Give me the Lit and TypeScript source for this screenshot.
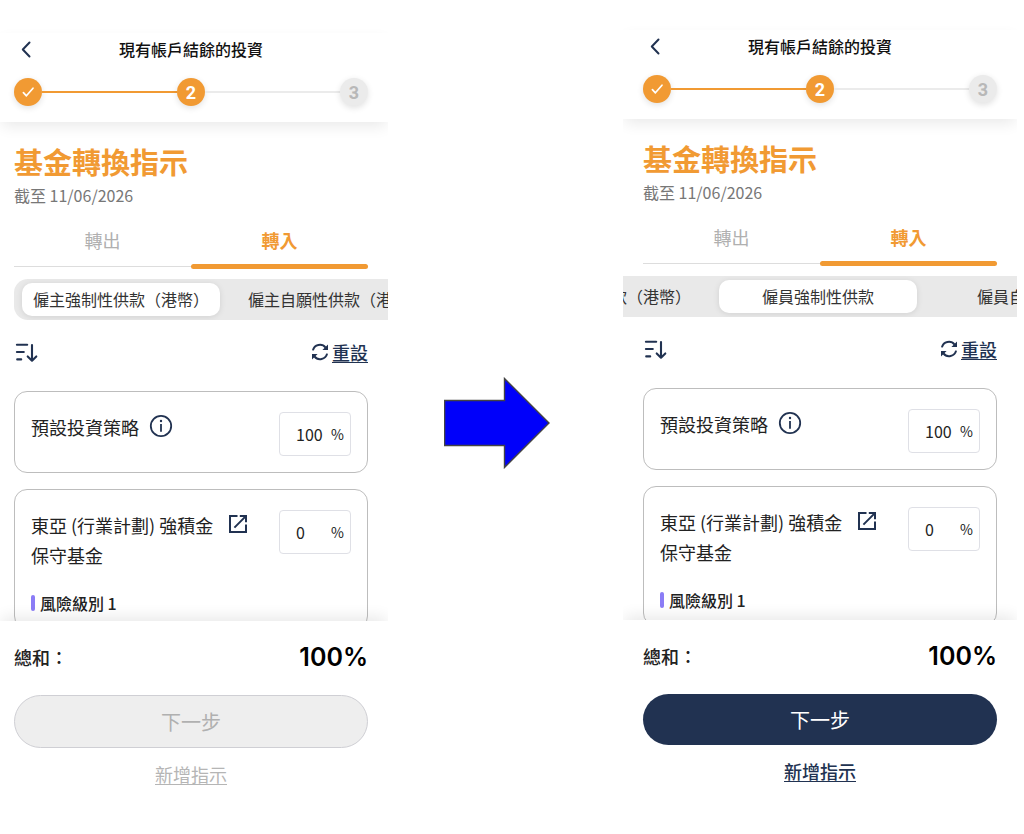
import { LitElement, html, css, svg, nothing } from "lit";
import { customElement, property, query } from "lit/decorators.js";
import { classMap } from "lit/directives/class-map.js";

interface Fund {
  id: string;
  name: string;
  icon: "info" | "open";
  percent: number;
  risk?: string;
}

const FUNDS: Fund[] = [
  { id: "dis", name: "預設投資策略", icon: "info", percent: 100 },
  { id: "conservative", name: "東亞 (行業計劃) 強積金保守基金", icon: "open", percent: 0, risk: "風險級別 1" },
];

const ACCOUNTS = ["僱主強制性供款（港幣）", "僱主自願性供款（港幣）", "僱員強制性供款", "僱員自願性供款"];

const chevron = svg`<svg width="24" height="24" viewBox="0 0 24 24" fill="none" stroke="currentColor" stroke-width="2" stroke-linecap="round" stroke-linejoin="round" aria-hidden="true"><path d="M15.500 5.500 8.800 12.500 15.500 19.500"/></svg>`;

const tick = svg`<svg width="14" height="12" viewBox="0 0 14 12" fill="none" stroke="currentColor" stroke-width="1.7" stroke-linecap="round" stroke-linejoin="round" aria-hidden="true"><path d="M2.4 6.6 5.4 9.8 12 2.2"/></svg>`;

const sortIcon = svg`<svg width="24" height="24" viewBox="0 0 24 24" fill="none" stroke="currentColor" stroke-width="2.1" stroke-linecap="round" stroke-linejoin="round" aria-hidden="true"><path d="M2.900 4.700H13.200M2.900 12H9.800M3.200 19.400H7.200M18 5V20.600M13.700 16.400 18 20.700 22.300 16.400"/></svg>`;

const resetIcon = svg`<svg width="18" height="18" viewBox="0 0 18 18" aria-hidden="true"><path d="M1.900 7.400A7.200 7.200 0 0 1 14.600 4.600M16.100 10.600A7.200 7.200 0 0 1 3.400 13.400" fill="none" stroke="currentColor" stroke-width="2"/><path d="M17 1.400V7H11.400ZM1 16.600V11H6.600Z" fill="currentColor"/></svg>`;

const infoIcon = svg`<svg width="24" height="24" viewBox="0 0 24 24" fill="none" stroke="currentColor" stroke-width="1.8" aria-hidden="true"><circle cx="12" cy="12" r="10.2"/><path d="M12 10V17.800"/><circle cx="12" cy="7" r="1.2" fill="currentColor" stroke="none"/></svg>`;

const openIcon = svg`<svg width="24" height="24" viewBox="0 0 24 24" fill="none" stroke="currentColor" stroke-width="2" aria-hidden="true"><path d="M11.500 4H4V20H20V12.500M13.800 4H20V10.200M19.600 4.400 8.400 15.600"/></svg>`;

@customElement("transfer-screen")
export class TransferScreen extends LitElement {
  @property({ type: Number }) account = 0;
  @property({ type: Boolean, reflect: true }) ready = false;
  @property({ type: String }) name = "";
  @query(".accounts") private strip!: HTMLElement;
  @query(".account.active") private active!: HTMLElement;

  static styles = css`
    :host {
      --navy: #213251;
      --orange: #f19a33;
      --start: 14px;
      --end: 20px;
      display: flex;
      flex-direction: column;
      min-width: 0;
      height: 100vh;
      box-sizing: border-box;
      padding-top: 33px;
      overflow: hidden;
      color: #222;
      font-family: "Noto Sans CJK TC", "Noto Sans", sans-serif;
      font-size: 16px;
      line-height: 24px;
    }
    :host([ready]) {
      --start: 20px;
      padding-top: 30px;
    }
    * { box-sizing: border-box; }
    button, input { font: inherit; color: inherit; background: none; border: 0; padding: 0; margin: 0; }
    svg { display: block; flex: none; }
    h1, h2, p { margin: 0; }

    header {
      position: relative;
      z-index: 1;
      flex: none;
      padding: 0 var(--end) 16px var(--start);
      background: #fff;
      box-shadow: 0 6px 14px -2px rgba(0, 0, 0, 0.09);
    }
    .titlebar { display: grid; grid-template-columns: 1fr auto 1fr; align-items: center; height: 32px; margin-bottom: 13px; }
    .back { color: var(--navy); justify-self: start; }
    .titlebar h1 { font-size: 16px; font-weight: 500; color: #111; }
    .steps { display: flex; align-items: center; }
    .step {
      display: grid; place-items: center; width: 28px; height: 28px; border-radius: 50%;
      background: var(--orange); color: #fff; font: 700 18px/30px Roboto, sans-serif;
      box-shadow: 0 2px 6px rgba(0, 0, 0, 0.12);
    }
    .step.todo { background: #ebebeb; color: #b8b8b8; }
    .line { flex: 1; height: 2px; background: var(--orange); }
    .line.todo { background: #ebebeb; }

    main { flex: 1; min-height: 0; overflow: hidden; padding: 19px var(--end) 0 var(--start); }
    .heading { font-size: 29px; line-height: 40px; font-weight: 700; color: var(--orange); margin-bottom: 2px; }
    .date { color: #777; margin-bottom: 14px; }

    .tabs { display: grid; grid-template-columns: 1fr 1fr; align-items: start; height: 48px; margin-bottom: 10px; }
    .tab { height: 46px; padding-bottom: 7px; font-size: 18px; line-height: 38px; color: #b0b0b0; border-bottom: 1px solid #ddd; }
    .tab.active { display: flex; flex-direction: column; align-items: center; height: 48px; padding: 0; border: 0; font-weight: 700; color: var(--orange); }
    .tab.active::after { content: ""; width: 100%; height: 5px; margin-top: auto; border-radius: 3px; background: var(--orange); }

    .accounts { margin-right: calc(0px - var(--end)); overflow-x: auto; scrollbar-width: none; }
    :host([ready]) .accounts { margin-left: calc(0px - var(--start)); padding-left: var(--start); }
    .track { display: flex; gap: 17px; width: max-content; padding: 4px 8px; border-radius: 14px; background: #e9e9e9; }
    .account { width: 198px; height: 33px; padding-bottom: 1px; border-radius: 10px; white-space: nowrap; color: #333; }
    .account.active { background: #fff; box-shadow: 0 1px 6px rgba(0, 0, 0, 0.1); }

    .tools { display: flex; justify-content: space-between; align-items: center; height: 30px; margin: 17px 0 24px; color: var(--navy); }
    .reset { display: flex; align-items: center; gap: 3px; font-size: 18px; font-weight: 500; }
    .reset span, .add { text-decoration: underline; text-underline-offset: 2px; }

    .funds { display: grid; gap: 16px; }
    .card { border: 1px solid #bdbdbd; border-radius: 13px; padding: 20px 16px 16px; }
    .row { display: flex; align-items: flex-start; justify-content: space-between; gap: 29px; }
    .label { display: flex; align-items: flex-start; gap: 10px; min-width: 0; font-size: 18px; line-height: 30px; }
    .more { flex: none; margin-top: 2px; color: var(--navy); }
    .amount { display: flex; align-items: center; justify-content: space-between; flex: none; width: 72px; height: 44px; padding: 0 6px 0 16px; border: 1px solid #dfe0e6; border-radius: 4px; }
    .amount input { width: 32px; height: 24px; outline: none; }
    .unit { font-size: 14px; }
    .risk { display: flex; align-items: center; gap: 5px; margin-top: 24px; line-height: 18px; font-weight: 500; }
    .risk::before { content: ""; width: 4px; height: 16px; border-radius: 2px; background: #8b7cf6; }

    footer {
      position: relative; z-index: 1; flex: none; background: #fff;
      padding: 21px var(--end) 46px var(--start);
      box-shadow: 0 -6px 14px -2px rgba(0, 0, 0, 0.09);
    }
    :host([ready]) footer { padding-bottom: 49px; }
    .sum { display: flex; align-items: center; justify-content: space-between; height: 30px; margin-bottom: 23px; font-size: 18px; font-weight: 500; }
    .total { font: 600 25px/30px Inter, sans-serif; color: #000; }
    .next { display: block; width: 100%; height: 51px; border-radius: 27px; background: var(--navy); color: #fff; font-size: 20px; font-weight: 400; }
    .next:disabled { height: 53px; background: #eee; border: 1px solid #cfcfd4; color: #b0b0b0; }
    .add { display: block; margin: 12px auto 0; font-size: 18px; line-height: 28px; font-weight: 500; color: var(--navy); }
    .add:disabled { color: #b5b5b5; font-weight: 400; }
  `;

  firstUpdated() {
    const { strip, active } = this;
    const a = active.getBoundingClientRect();
    const s = strip.getBoundingClientRect();
    strip.scrollLeft = a.left - s.left - (s.width - a.width) / 2 + 2;
  }

  private renderAccounts() {
    return ACCOUNTS.map((label, i) =>
      Math.abs(i - this.account) > 1
        ? nothing
        : html`<button class=${classMap({ account: true, active: i === this.account })}>${label}</button>`
    );
  }

  private renderFund(f: Fund) {
    const id = `${this.name}-${f.id}`;
    return html`<article class="card">
      <div class="row">
        <div class="label">
          <label for=${id}>${f.name}</label>
          <button class="more" aria-label="${f.name}">${f.icon === "info" ? infoIcon : openIcon}</button>
        </div>
        <div class="amount">
          <input id=${id} type="text" inputmode="numeric" .value=${String(f.percent)} />
          <span class="unit">%</span>
        </div>
      </div>
      ${f.risk ? html`<p class="risk">${f.risk}</p>` : nothing}
    </article>`;
  }

  render() {
    return html`
      <header>
        <div class="titlebar">
          <button class="back" aria-label="返回">${chevron}</button>
          <h1>現有帳戶結餘的投資</h1>
        </div>
        <div class="steps">
          <span class="step">${tick}</span>
          <span class="line"></span>
          <span class="step">2</span>
          <span class="line todo"></span>
          <span class="step todo">3</span>
        </div>
      </header>
      <main>
        <h2 class="heading">基金轉換指示</h2>
        <p class="date">截至 11/06/2026</p>
        <div class="tabs">
          <button class="tab">轉出</button>
          <button class="tab active">轉入</button>
        </div>
        <div class="accounts">
          <div class="track">${this.renderAccounts()}</div>
        </div>
        <div class="tools">
          <button aria-label="排序">${sortIcon}</button>
          <button class="reset">${resetIcon}<span>重設</span></button>
        </div>
        <div class="funds">${FUNDS.map((f) => this.renderFund(f))}</div>
      </main>
      <footer>
        <div class="sum"><span>總和：</span><span class="total">100%</span></div>
        <button class="next" ?disabled=${!this.ready}>下一步</button>
        <button class="add" ?disabled=${!this.ready}>新增指示</button>
      </footer>
    `;
  }
}

@customElement("app-root")
export class AppRoot extends LitElement {
  static styles = css`
    :host {
      display: grid;
      grid-template-columns: 388fr 235fr 394fr;
      padding-right: 7px;
      background: #fff;
    }
    .arrow { display: grid; place-items: center; padding: 12px 18px 0 0; }
    .arrow svg { display: block; width: 106px; height: 92px; }
  `;

  render() {
    return html`
      <transfer-screen name="before" .account=${0}></transfer-screen>
      <div class="arrow">
        <svg viewBox="0 0 106 92" aria-hidden="true">
          <path d="M.6 23.500H60.500V1.500L105 46 60.500 90.500V68.500H.6Z" fill="#0000fa" stroke="#444" stroke-width="1.400" />
        </svg>
      </div>
      <transfer-screen name="after" ready .account=${2}></transfer-screen>
    `;
  }
}
